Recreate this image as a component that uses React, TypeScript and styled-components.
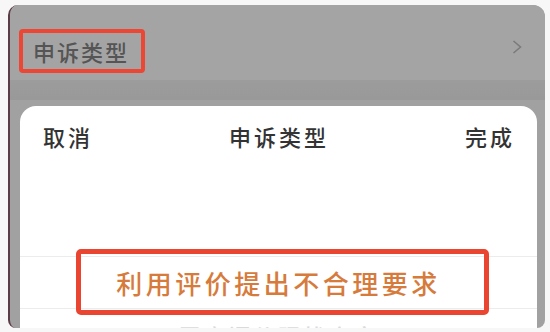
import styled, { createGlobalStyle } from 'styled-components';

const GlobalStyle = createGlobalStyle`
  html, body {
    margin: 0;
    padding: 0;
    background: #f7f7f7;
  }
  body {
    font-family: "Noto Sans CJK SC", "Noto Sans", sans-serif;
  }
`;

const Page = styled.div`
  width: 550px;
  height: 332px;
  padding: 5px 5px 4px 8px;
  box-sizing: border-box;
`;

const Screen = styled.div`
  height: 100%;
  display: flex;
  flex-direction: column;
  background: #a1a1a1;
  border-left: 2px solid #5b3d45;
  border-radius: 10px 12px 8px 8px;
  overflow: hidden;
  box-sizing: border-box;
`;

const FormRow = styled.div`
  height: 75px;
  flex: none;
  display: flex;
  justify-content: space-between;
  align-items: flex-start;
  padding: 24px 23px 0 9px;
  box-sizing: border-box;
  background: #a4a4a4;
`;

const FieldLabel = styled.div`
  border: 4px solid #ec4634;
  border-radius: 4px;
  padding: 0 12px 0 10px;
  height: 44px;
  display: flex;
  align-items: center;
  box-sizing: border-box;
  font-size: 22px;
  font-weight: 500;
  letter-spacing: 2px;
  color: #555;
`;

const Chevron = styled.svg`
  margin-top: 11px;
`;

const Band = styled.div`
  height: 20px;
  flex: none;
  background: linear-gradient(#9c9c9c, #999);
`;

const Sheet = styled.div`
  flex: 1;
  margin: 6px 8px 0 10px;
  background: #fff;
  border-radius: 16px 16px 0 0;
  overflow: hidden;
  display: flex;
  flex-direction: column;
`;

const SheetHeader = styled.div`
  height: 60px;
  flex: none;
  display: flex;
  justify-content: space-between;
  align-items: flex-start;
  padding: 18px 22px 0 23px;
  box-sizing: border-box;
`;

const HeaderText = styled.span`
  font-size: 22px;
  line-height: 24px;
  font-weight: 500;
  letter-spacing: 3px;
  color: #333;
`;

const Picker = styled.div`
  padding-top: 90px;
`;

const OptionRow = styled.div<{ $selected?: boolean }>`
  position: relative;
  height: 51px;
  display: flex;
  align-items: center;
  justify-content: center;
  font-size: ${(p) => (p.$selected ? '26px' : '22px')};
  font-weight: 500;
  letter-spacing: ${(p) => (p.$selected ? '3.5px' : '3px')};
  color: ${(p) => (p.$selected ? '#d67b3c' : '#dadada')};
  border-top: ${(p) => (p.$selected ? '1px solid #ececec' : 'none')};
  border-bottom: ${(p) => (p.$selected ? '1px solid #ececec' : 'none')};
`;

const Highlight = styled.div`
  position: absolute;
  left: 56px;
  top: -8px;
  width: 413px;
  height: 66px;
  border: 5px solid #ea4531;
  border-radius: 5px;
  box-sizing: border-box;
  pointer-events: none;
`;

export default function App() {
  return (
    <>
      <GlobalStyle />
      <Page>
        <Screen>
          <FormRow>
            <FieldLabel>申诉类型</FieldLabel>
            <Chevron width="10" height="14" viewBox="0 0 10 14">
              <polyline points="1.5,1 8.5,7 1.5,13" fill="none" stroke="#7b7b7b" strokeWidth="1.6" />
            </Chevron>
          </FormRow>
          <Band />
          <Sheet>
            <SheetHeader>
              <HeaderText>取消</HeaderText>
              <HeaderText>申诉类型</HeaderText>
              <HeaderText>完成</HeaderText>
            </SheetHeader>
            <Picker>
              <OptionRow $selected>
                利用评价提出不合理要求
                <Highlight />
              </OptionRow>
              <OptionRow>恶意评价骚扰商家</OptionRow>
            </Picker>
          </Sheet>
        </Screen>
      </Page>
    </>
  );
}
